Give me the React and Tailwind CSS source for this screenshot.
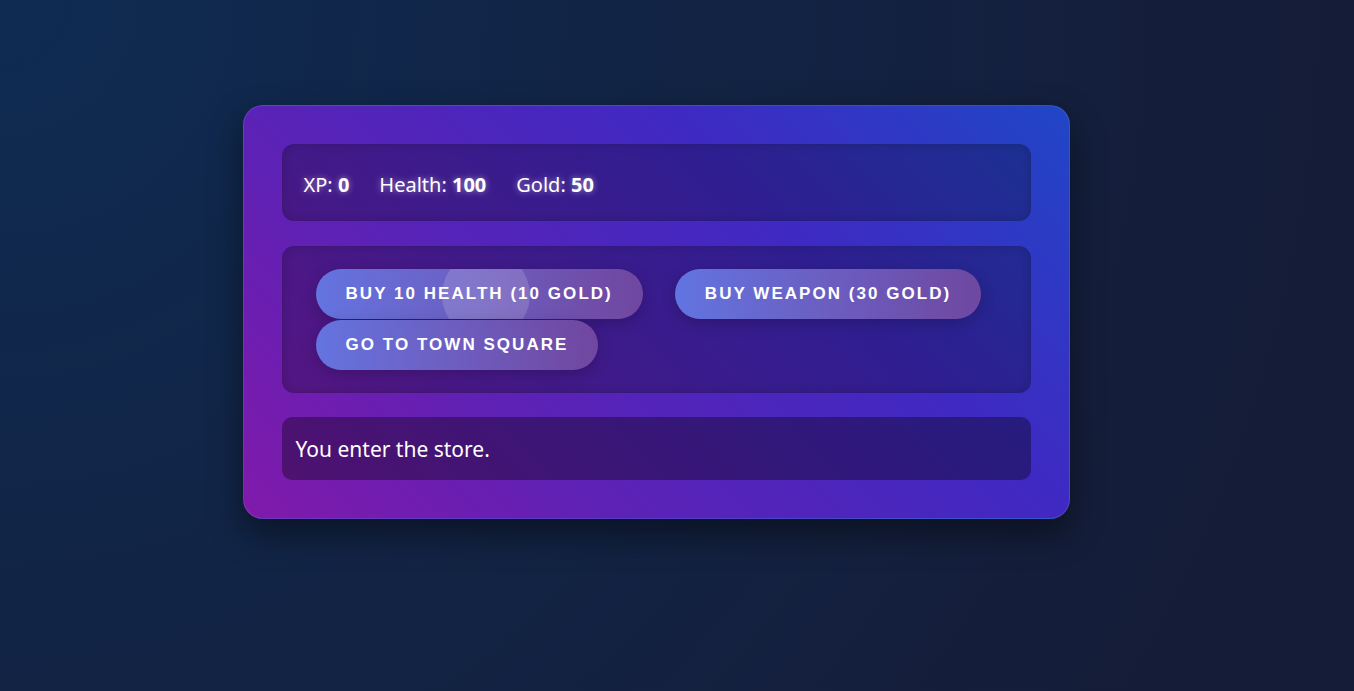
import React from "react";

const font = { fontFamily: '"Segoe UI", "Noto Sans", sans-serif' };

function ActionButton({ label, ripple }) {
  return (
    <button className="relative h-[50px] overflow-hidden rounded-full bg-gradient-to-r from-[#667eea]/90 to-[#764ba2]/90 px-[30px] font-['Liberation_Sans',Arial,sans-serif] text-[17px] font-bold uppercase tracking-[0.12em] text-white shadow-[0_4px_15px_rgba(0,0,0,0.2)]">
      {ripple && (
        <span className="absolute left-[126px] top-[-18px] h-[88px] w-[88px] rounded-full bg-white/15" />
      )}
      <span className="relative">{label}</span>
    </button>
  );
}

export default function App() {
  return (
    <div
      className="flex min-h-screen items-start justify-center bg-[radial-gradient(circle_at_top_left,#0f2b52,#151c37_90%)] pr-[42px] pt-[105px]"
      style={font}
    >
      <div className="w-[827px] rounded-[20px] border border-white/10 bg-[linear-gradient(45deg,#801aab,#5b22b6_33%,#3f29c2_67%,#2046c6)] px-[38px] py-[38px] shadow-[0_15px_35px_rgba(0,0,0,0.45)]">
        <div className="flex h-[77px] items-center gap-[30px] rounded-xl border border-black/10 bg-black/25 px-[21px] pt-[5px] text-[20px] text-white shadow-[inset_0_0_12px_rgba(0,0,0,0.15)] [text-shadow:0_0_6px_rgba(255,255,255,0.5)]">
          <span>
            XP: <strong>0</strong>
          </span>
          <span>
            Health: <strong>100</strong>
          </span>
          <span>
            Gold: <strong>50</strong>
          </span>
        </div>

        <div className="mt-[25px] flex h-[147px] flex-wrap content-start gap-x-8 gap-y-px rounded-xl border border-black/10 bg-black/25 pl-[33px] pr-[20px] pt-[22px] shadow-[inset_0_0_12px_rgba(0,0,0,0.15)]">
          <ActionButton label="Buy 10 health (10 gold)" ripple />
          <ActionButton label="Buy weapon (30 gold)" />
          <ActionButton label="Go to town square" />
        </div>

        <div className="mt-[24px] flex h-[63px] items-center rounded-[10px] bg-black/35 px-[14px] pt-[3px] text-[21px] text-white">
          You enter the store.
        </div>
      </div>
    </div>
  );
}
